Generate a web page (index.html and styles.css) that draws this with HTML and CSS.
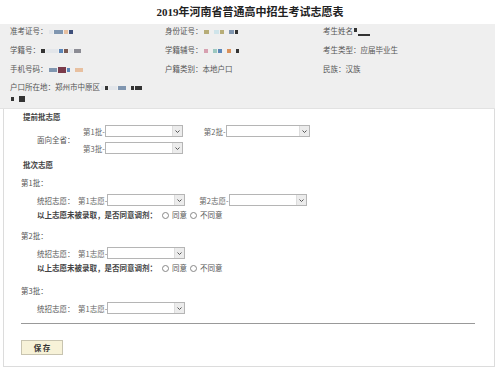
FILE: index.html
```html
<!DOCTYPE html>
<html lang="zh-CN">
<head>
    <meta charset="UTF-8">
    <meta name="viewport" content="width=device-width, initial-scale=1.0">
    <title>2019年河南省普通高中招生考试志愿表</title>
    <link rel="stylesheet" href="styles.css">
</head>
<body>
    <h1 class="title">2019年河南省普通高中招生考试志愿表</h1>

    <!-- 考生信息 -->
    <div class="info">
        <div class="info-row">
            <div>准考证号：<span class="blur b-light w4"></span><span class="blur b-slate w9"></span><span class="blur b-peach w4"></span><span class="blur b-navy w4"></span></div>
            <div>身份证号：<span class="blur b-olive w5"></span><span class="blur b-cyan w5 gap"></span><span class="blur b-olive w4"></span><span class="blur b-slate w5 gap"></span><span class="blur b-dark w3"></span></div>
            <div>考生姓名<span class="blur b-dark w3 up"></span><span class="blur b-dark w12 down"></span></div>
        </div>
        <div class="info-row">
            <div>学籍号：<span class="blur b-dark w4"></span><span class="blur b-light w12"></span><span class="blur b-blue w4"></span><span class="blur b-brown w4"></span><span class="blur b-light w4"></span><span class="blur b-gray w7"></span></div>
            <div>学籍辅号：<span class="blur b-pink w4"></span><span class="blur b-teal w4 gap"></span><span class="blur b-blue w4"></span><span class="blur b-orange w4 gap"></span><span class="blur b-dark w3 gap"></span></div>
            <div>考生类型：应届毕业生</div>
        </div>
        <div class="info-row">
            <div>手机号码：<span class="blur b-slate w8"></span><span class="blur b-wine w8 tall"></span><span class="blur b-blue w3"></span><span class="blur b-peach w8 gap"></span></div>
            <div>户籍类别：本地户口</div>
            <div>民族：汉族</div>
        </div>
        <div class="info-row address">
            <div>户口所在地：郑州市中原区<span class="blur b-light w3"></span><span class="blur b-dark w3"></span><span class="blur b-light w8"></span><span class="blur b-slate w8"></span><span class="blur b-dark w3 gap"></span><span class="blur b-dark w7"></span><br><span class="blur b-dark w3"></span><span class="blur b-dark w6 tall gap"></span></div>
        </div>
    </div>

    <!-- 志愿填报 -->
    <div class="main">
        <h2 class="section">提前批志愿</h2>
        <div class="advance">
            <div class="advance-label">面向全省：</div>
            <div class="advance-choices">
                <div class="choice-row">
                    <span class="pick">第1批-</span><span class="select"><span class="arrow"><svg width="5" height="3" viewBox="0 0 5 3"><path d="M0.5 0.5 L2.5 2.5 L4.5 0.5" fill="none" stroke="#555" stroke-width="1"/></svg></span></span>
                    <span class="pick second">第2批-</span><span class="select wide"><span class="arrow"><svg width="5" height="3" viewBox="0 0 5 3"><path d="M0.5 0.5 L2.5 2.5 L4.5 0.5" fill="none" stroke="#555" stroke-width="1"/></svg></span></span>
                </div>
                <div class="choice-row">
                    <span class="pick">第3批-</span><span class="select"><span class="arrow"><svg width="5" height="3" viewBox="0 0 5 3"><path d="M0.5 0.5 L2.5 2.5 L4.5 0.5" fill="none" stroke="#555" stroke-width="1"/></svg></span></span>
                </div>
            </div>
        </div>

        <h2 class="section batch-title">批次志愿</h2>

        <div class="batch first">第1批：</div>
        <div class="wish-row">
            <span class="wish-label">统招志愿：</span>
            <span class="pick">第1志愿-</span><span class="select"><span class="arrow"><svg width="5" height="3" viewBox="0 0 5 3"><path d="M0.5 0.5 L2.5 2.5 L4.5 0.5" fill="none" stroke="#555" stroke-width="1"/></svg></span></span>
            <span class="pick second-wish">第2志愿-</span><span class="select"><span class="arrow"><svg width="5" height="3" viewBox="0 0 5 3"><path d="M0.5 0.5 L2.5 2.5 L4.5 0.5" fill="none" stroke="#555" stroke-width="1"/></svg></span></span>
        </div>
        <div class="adjust">
            <b>以上志愿未被录取，是否同意调剂：</b>
            <span class="radio"></span>同意
            <span class="radio"></span>不同意
        </div>

        <div class="batch">第2批：</div>
        <div class="wish-row">
            <span class="wish-label">统招志愿：</span>
            <span class="pick">第1志愿-</span><span class="select"><span class="arrow"><svg width="5" height="3" viewBox="0 0 5 3"><path d="M0.5 0.5 L2.5 2.5 L4.5 0.5" fill="none" stroke="#555" stroke-width="1"/></svg></span></span>
        </div>
        <div class="adjust">
            <b>以上志愿未被录取，是否同意调剂：</b>
            <span class="radio"></span>同意
            <span class="radio"></span>不同意
        </div>

        <div class="batch last">第3批：</div>
        <div class="wish-row">
            <span class="wish-label">统招志愿：</span>
            <span class="pick">第1志愿-</span><span class="select"><span class="arrow"><svg width="5" height="3" viewBox="0 0 5 3"><path d="M0.5 0.5 L2.5 2.5 L4.5 0.5" fill="none" stroke="#555" stroke-width="1"/></svg></span></span>
        </div>

        <hr class="divider">

        <button class="save">保 存</button>
    </div>
</body>
</html>
```

FILE: styles.css
```css
/* 志愿表样式 */
body {
    margin: 0;
    background-color: #fff;
    color: #555;
    font-family: "Noto Sans CJK SC", "Liberation Sans", sans-serif;
    font-size: 7.5px;
}

.title {
    margin: 0;
    height: 24px;
    line-height: 25px;
    text-align: center;
    font-family: "Liberation Serif", "Noto Sans CJK SC", serif;
    font-size: 11px;
    font-weight: bold;
    color: #222;
}

.info {
    background-color: #efefef;
    margin-right: 5px;
    padding: 0 0 5px 10px;
    border-bottom: 1px solid #e2e2e2;
}

.info-row {
    display: grid;
    grid-template-columns: 155px 158px auto;
    line-height: 14px;
    margin-bottom: 5px;
}

.info-row.address {
    display: block;
    line-height: 11px;
    margin-bottom: 0;
}

/* 打码块 */
.blur {
    display: inline-block;
    height: 4px;
    vertical-align: middle;
    margin-left: 1px;
}

.blur.gap { margin-left: 5px; }
.blur.tall { height: 6px; }
.blur.up { vertical-align: 2px; }
.blur.down { vertical-align: -2px; height: 2px; }

.w3 { width: 3px; }
.w4 { width: 4px; }
.w5 { width: 5px; }
.w6 { width: 6px; }
.w7 { width: 7px; }
.w8 { width: 8px; }
.w9 { width: 9px; }
.w12 { width: 12px; }

.b-light { background-color: #e3e6ea; }
.b-slate { background-color: #8096b0; }
.b-peach { background-color: #e8c0a0; }
.b-navy { background-color: #3e4f7a; }
.b-olive { background-color: #b7ad78; }
.b-cyan { background-color: #cfe4ea; }
.b-dark { background-color: #333; }
.b-blue { background-color: #5b86b8; }
.b-brown { background-color: #7a5a52; }
.b-gray { background-color: #8c8c94; }
.b-pink { background-color: #d7a0b0; }
.b-teal { background-color: #9cc8c0; }
.b-orange { background-color: #d9905a; }
.b-wine { background-color: #7a3a4a; }

.main {
    border: 1px solid #dcdcdc;
    border-top: none;
    margin: 0 5px 4px 3px;
    padding: 2px 0 11px 17px;
}

.section {
    margin: 0 0 0 2px;
    line-height: 12px;
    font-size: 7.5px;
    font-weight: bold;
    color: #444;
}

.batch-title {
    margin-top: 4px;
}

.advance {
    display: flex;
    align-items: center;
    margin-top: 1px;
}

.advance-label {
    width: 46px;
    padding-left: 16px;
}

.choice-row {
    display: flex;
    align-items: center;
    height: 14px;
    margin-bottom: 3px;
}

.choice-row:last-child {
    margin-bottom: 0;
}

.pick {
    font-size: 7.5px;
    color: #666;
}

.pick.second {
    margin-left: 21px;
}

.pick.second-wish {
    margin-left: 14px;
}

/* 下拉框 */
.select {
    display: inline-flex;
    justify-content: flex-end;
    box-sizing: border-box;
    width: 78px;
    height: 12px;
    border: 1px solid #b5b5b5;
    background-color: #fff;
    vertical-align: middle;
}

.select.wide {
    width: 84px;
}

.arrow {
    display: flex;
    align-items: center;
    justify-content: center;
    width: 9px;
    background-color: #ececec;
    border-left: 1px solid #ddd;
}

.batch {
    line-height: 12px;
    margin-top: 9px;
}

.batch.first {
    margin-top: 6px;
}

.batch.last {
    margin-top: 11px;
}

.wish-row {
    display: flex;
    align-items: center;
    height: 14px;
    margin-top: 4px;
    padding-left: 16px;
}

.wish-label {
    width: 41px;
}

.adjust {
    display: flex;
    align-items: center;
    line-height: 12px;
    margin-top: 2px;
    padding-left: 16px;
}

.adjust b {
    color: #444;
    margin-right: 2px;
}

.radio {
    display: inline-block;
    box-sizing: border-box;
    width: 7px;
    height: 7px;
    border: 1px solid #888;
    border-radius: 50%;
    margin: 0 3px 0 3px;
}

.divider {
    margin: 8px 19px 0 0;
    border: none;
    border-top: 1px solid #999;
}

.save {
    display: block;
    margin-top: 16px;
    width: 42px;
    height: 15px;
    padding: 0;
    border: 1px solid #c8c4b0;
    background-color: #f7f2d8;
    color: #333;
    font-family: "Noto Sans CJK SC", sans-serif;
    font-size: 7.5px;
    font-weight: bold;
    line-height: 13px;
}
```
